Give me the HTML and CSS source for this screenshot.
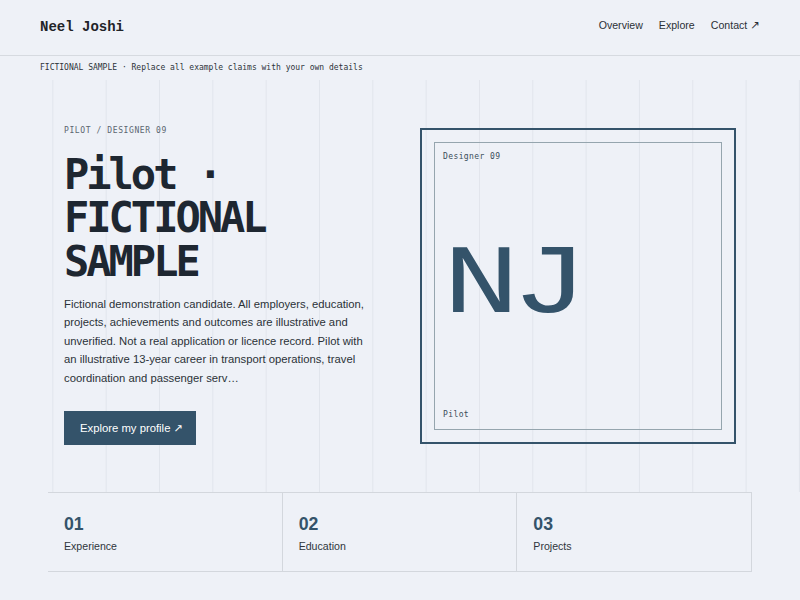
FILE: index.html
```html
<!DOCTYPE html>
<html lang="en">
<head>
<meta charset="utf-8">
<title>Neel Joshi</title>
<link rel="stylesheet" href="styles.css">
</head>
<body>
<header class="site-header">
  <a class="logo" href="#">Neel Joshi</a>
  <nav class="nav">
    <a href="#">Overview</a>
    <a href="#">Explore</a>
    <a href="#">Contact <span class="arrow">↗</span></a>
  </nav>
</header>
<div class="notice">FICTIONAL SAMPLE · Replace all example claims with your own details</div>
<main>
  <section class="hero">
    <div class="hero-inner">
      <div class="hero-text">
        <p class="eyebrow">PILOT / DESIGNER 09</p>
        <h1 class="title">Pilot · FICTIONAL SAMPLE</h1>
        <p class="lead">Fictional demonstration candidate. All employers, education, projects, achievements and outcomes are illustrative and unverified. Not a real application or licence record. Pilot with an illustrative 13-year career in transport operations, travel coordination and passenger serv…</p>
        <a class="btn" href="#">Explore my profile <span class="arrow btn-arrow">↗</span></a>
      </div>
      <div class="card">
        <div class="card-inner">
          <span class="card-label">Designer 09</span>
          <span class="monogram">NJ</span>
          <span class="card-label">Pilot</span>
        </div>
      </div>
    </div>
  </section>
  <section class="stats">
    <div class="stat"><div class="stat-num">01</div><div class="stat-label">Experience</div></div>
    <div class="stat"><div class="stat-num">02</div><div class="stat-label">Education</div></div>
    <div class="stat"><div class="stat-num">03</div><div class="stat-label">Projects</div></div>
  </section>
</main>
</body>
</html>
```

FILE: styles.css
```css
* { box-sizing: border-box; }

body {
  margin: 0;
  background: #eef1f7;
  font-family: "Liberation Sans", Arial, sans-serif;
  color: #2b3138;
}

a { color: inherit; text-decoration: none; }

.site-header {
  height: 56px;
  padding: 0 40px 2px;
  display: flex;
  align-items: center;
  justify-content: space-between;
  border-bottom: 1px solid #d6dae0;
}

.logo {
  font-family: "Courier New", "Nimbus Mono PS", "FreeMono", "Liberation Mono", monospace;
  font-weight: bold;
  font-size: 14px;
  color: #1f2328;
}

.nav {
  display: flex;
  gap: 16px;
  padding-bottom: 2px;
  font-size: 10.6px;
  color: #2b3036;
}

.arrow {
  font-family: "DejaVu Sans", sans-serif;
  font-size: 1.1em;
  line-height: 1;
}

.btn-arrow { font-size: 1em; }

.notice {
  height: 24px;
  line-height: 24px;
  padding: 0 40px;
  font-family: "DejaVu Sans Mono", monospace;
  font-size: 8px;
  color: #2d333a;
}

.hero {
  background-image: linear-gradient(to left, #e1e5ec 1px, transparent 1px);
  background-size: calc(100% / 15) 100%;
}

.hero-inner {
  padding: 48px 64px;
  display: grid;
  grid-template-columns: 1fr 1fr;
  grid-template-rows: 316px;
  gap: 40px;
  align-items: center;
}

.hero-text {
  display: flex;
  flex-direction: column;
  align-items: flex-start;
}

.eyebrow {
  margin: 0 0 17.6px;
  font-family: "DejaVu Sans Mono", monospace;
  font-size: 8px;
  line-height: 8px;
  letter-spacing: 0.6px;
  color: #5b6670;
}

.title {
  margin: 0;
  font-family: "DejaVu Sans Mono", monospace;
  font-weight: bold;
  font-size: 42px;
  line-height: 43.5px;
  letter-spacing: -3px;
  color: #1e2731;
}

.lead {
  margin: 11.4px 0 0;
  max-width: 312px;
  font-size: 11.28px;
  line-height: 18.6px;
  color: #2b3138;
}

.btn {
  margin-top: 23.5px;
  height: 34px;
  line-height: 34px;
  padding: 0 13px 0 16px;
  background: #34536a;
  color: #ffffff;
  font-size: 11.3px;
}

.card {
  width: 100%;
  aspect-ratio: 1 / 1;
  border: 2px solid #34536a;
  padding: 12px;
}

.card-inner {
  height: 100%;
  border: 1px solid #95a5ae;
  padding: 8px;
  display: flex;
  flex-direction: column;
  justify-content: space-between;
  align-items: flex-start;
}

.card-label {
  font-family: "DejaVu Sans Mono", monospace;
  font-size: 8px;
  line-height: 12px;
  letter-spacing: 0.4px;
  color: #3b4d5a;
}

.monogram {
  display: inline-block;
  font-family: "Liberation Mono", "Courier New", monospace;
  font-size: 98px;
  line-height: 1;
  letter-spacing: -6px;
  color: #34536a;
  transform: scaleX(1.3);
  transform-origin: left center;
}

.stats {
  margin: 0 48px;
  display: grid;
  grid-template-columns: repeat(3, 1fr);
  border-top: 1px solid #d3d7dd;
  border-bottom: 1px solid #d3d7dd;
}

.stat {
  padding: 21px 16px 17px;
  border-right: 1px solid #d3d7dd;
}

.stat-num {
  font-weight: bold;
  font-size: 17.7px;
  line-height: 20.4px;
  color: #34536a;
}

.stat-label {
  margin-top: 4.8px;
  font-size: 10.6px;
  line-height: 14.8px;
  color: #2f353c;
}
```
